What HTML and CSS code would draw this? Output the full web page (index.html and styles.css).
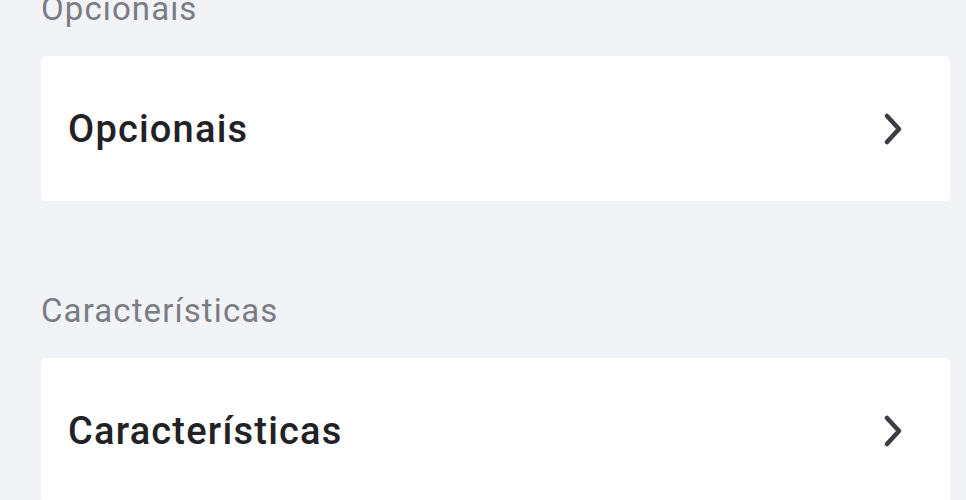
FILE: index.html
```
<!doctype html>
<html>
<head>
	<meta charset="utf-8">
	<title>Opcionais e Características</title>
	<link rel="stylesheet" href="styles.css">
</head>
<body>
	<div class="page">
		<div class="section first">
			<div class="section-label">Opcionais</div>
			<a class="card" href="#">
				<span class="card-title">Opcionais</span>
				<svg class="chevron" width="22" height="34" viewBox="0 0 22 34"><path d="M4 4 L16 17 L4 30" fill="none" stroke="#3d3e45" stroke-width="4.6" stroke-linecap="round" stroke-linejoin="round"/></svg>
			</a>
		</div>
		<div class="section">
			<div class="section-label">Características</div>
			<a class="card" href="#">
				<span class="card-title">Características</span>
				<svg class="chevron" width="22" height="34" viewBox="0 0 22 34"><path d="M4 4 L16 17 L4 30" fill="none" stroke="#3d3e45" stroke-width="4.6" stroke-linecap="round" stroke-linejoin="round"/></svg>
			</a>
		</div>
	</div>
</body>
</html>
```

FILE: styles.css
```
html, body {
	margin: 0;
	padding: 0;
	background-color: #f2f3f7;
	font-family: Roboto, "Noto Sans", sans-serif;
	overflow: hidden;
}

.page {
	padding: 0 16px 0 41px;
	display: flex;
	flex-direction: column;
	gap: 90px;
}

.section.first {
	margin-top: -11px;
}

.section-label {
	font-size: 33px;
	line-height: 40px;
	letter-spacing: 1.1px;
	color: #7b7d84;
	margin-bottom: 27px;
}

.card {
	display: flex;
	align-items: center;
	justify-content: space-between;
	height: 145px;
	padding: 0 45px 0 27px;
	background-color: #fff;
	border-radius: 5px;
	text-decoration: none;
}

.card-title {
	font-size: 38px;
	font-weight: 500;
	letter-spacing: 1.2px;
	color: #222226;
}

.chevron {
	display: block;
}
```
